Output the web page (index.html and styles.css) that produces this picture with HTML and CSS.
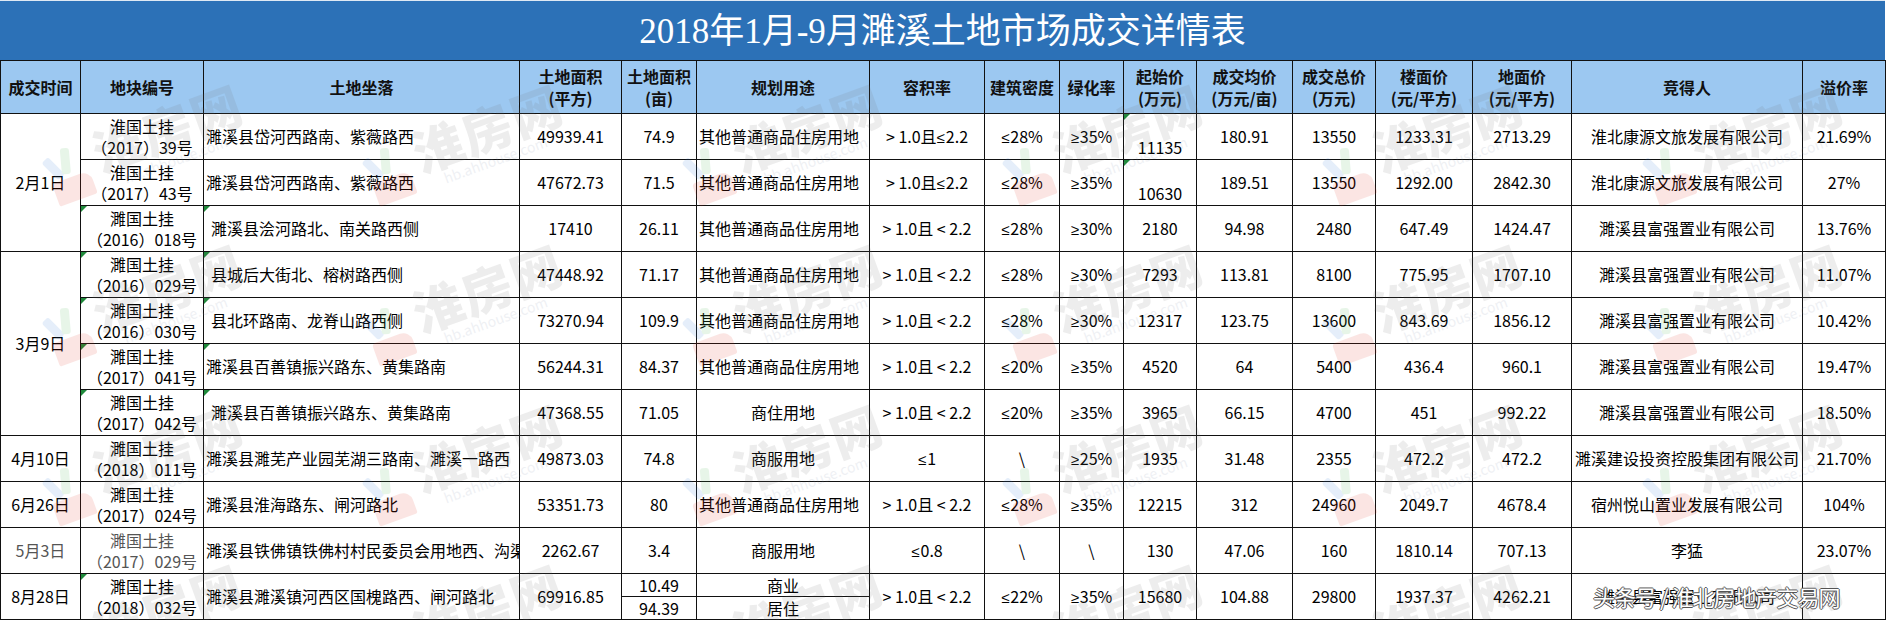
FILE: index.html
```html
<!DOCTYPE html>
<html lang="zh-CN">
<head>
<meta charset="utf-8">
<title>2018年1月-9月濉溪土地市场成交详情表</title>
<link rel="stylesheet" href="styles.css">
</head>
<body>
<div class="sheet">
  <div class="title">2018年1月-9月濉溪土地市场成交详情表</div>
  <table class="grid">
    <colgroup>
      <col class="c1"><col class="c2"><col class="c3"><col class="c4"><col class="c5"><col class="c6"><col class="c7"><col class="c8">
      <col class="c9"><col class="c10"><col class="c11"><col class="c12"><col class="c13"><col class="c14"><col class="c15"><col class="c16">
    </colgroup>
    <thead>
      <tr class="head">
        <th>成交时间</th><th>地块编号</th><th>土地坐落</th><th>土地面积<br>(平方)</th><th>土地面积<br>(亩)</th><th>规划用途</th><th>容积率</th><th>建筑密度</th>
        <th>绿化率</th><th>起始价<br>(万元)</th><th>成交均价<br>(万元/亩)</th><th>成交总价<br>(万元)</th><th>楼面价<br>(元/平方)</th><th>地面价<br>(元/平方)</th><th>竞得人</th><th>溢价率</th>
      </tr>
    </thead>
    <tbody>
      <tr>
        <td rowspan="3">2月1日</td><td>淮国土挂<br>（2017）39号</td><td class="addr">濉溪县岱河西路南、紫薇路西</td><td>49939.41</td><td>74.9</td><td class="use">其他普通商品住房用地</td><td>&gt; 1.0且<span class="op">≤</span>2.2</td><td><span class="op">≤</span>28%</td>
        <td><span class="op">≥</span>35%</td><td class="low mark">11135</td><td>180.91</td><td>13550</td><td>1233.31</td><td>2713.29</td><td>淮北康源文旅发展有限公司</td><td>21.69%</td>
      </tr>
      <tr>
        <td>淮国土挂<br>（2017）43号</td><td class="addr">濉溪县岱河西路南、紫薇路西</td><td>47672.73</td><td>71.5</td><td class="use">其他普通商品住房用地</td><td>&gt; 1.0且<span class="op">≤</span>2.2</td><td><span class="op">≤</span>28%</td>
        <td><span class="op">≥</span>35%</td><td class="low mark">10630</td><td>189.51</td><td>13550</td><td>1292.00</td><td>2842.30</td><td>淮北康源文旅发展有限公司</td><td>27%</td>
      </tr>
      <tr>
        <td class="mark">濉国土挂<br>（2016）018号</td><td class="addr indent mark">濉溪县浍河路北、南关路西侧</td><td>17410</td><td>26.11</td><td class="use">其他普通商品住房用地</td><td>&gt; 1.0且 &lt; 2.2</td><td><span class="op">≤</span>28%</td>
        <td><span class="op">≥</span>30%</td><td>2180</td><td>94.98</td><td>2480</td><td>647.49</td><td>1424.47</td><td>濉溪县富强置业有限公司</td><td>13.76%</td>
      </tr>
      <tr>
        <td rowspan="4">3月9日</td><td class="mark">濉国土挂<br>（2016）029号</td><td class="addr indent mark">县城后大街北、榕树路西侧</td><td>47448.92</td><td>71.17</td><td class="use">其他普通商品住房用地</td><td>&gt; 1.0且 &lt; 2.2</td><td><span class="op">≤</span>28%</td>
        <td><span class="op">≥</span>30%</td><td>7293</td><td>113.81</td><td>8100</td><td>775.95</td><td>1707.10</td><td>濉溪县富强置业有限公司</td><td>11.07%</td>
      </tr>
      <tr>
        <td class="mark">濉国土挂<br>（2016）030号</td><td class="addr indent mark">县北环路南、龙脊山路西侧</td><td>73270.94</td><td>109.9</td><td class="use">其他普通商品住房用地</td><td>&gt; 1.0且 &lt; 2.2</td><td><span class="op">≤</span>28%</td>
        <td><span class="op">≥</span>30%</td><td>12317</td><td>123.75</td><td>13600</td><td>843.69</td><td>1856.12</td><td>濉溪县富强置业有限公司</td><td>10.42%</td>
      </tr>
      <tr>
        <td class="mark">濉国土挂<br>（2017）041号</td><td class="addr mark">濉溪县百善镇振兴路东、黄集路南</td><td>56244.31</td><td>84.37</td><td class="use">其他普通商品住房用地</td><td>&gt; 1.0且 &lt; 2.2</td><td><span class="op">≤</span>20%</td>
        <td><span class="op">≥</span>35%</td><td>4520</td><td>64</td><td>5400</td><td>436.4</td><td>960.1</td><td>濉溪县富强置业有限公司</td><td>19.47%</td>
      </tr>
      <tr>
        <td class="mark">濉国土挂<br>（2017）042号</td><td class="addr indent mark">濉溪县百善镇振兴路东、黄集路南</td><td>47368.55</td><td>71.05</td><td>商住用地</td><td>&gt; 1.0且 &lt; 2.2</td><td><span class="op">≤</span>20%</td>
        <td><span class="op">≥</span>35%</td><td>3965</td><td>66.15</td><td>4700</td><td>451</td><td>992.22</td><td>濉溪县富强置业有限公司</td><td>18.50%</td>
      </tr>
      <tr>
        <td>4月10日</td><td>濉国土挂<br>（2018）011号</td><td class="addr">濉溪县濉芜产业园芜湖三路南、濉溪一路西</td><td>49873.03</td><td>74.8</td><td>商服用地</td><td><span class="op">≤</span>1</td><td>\</td>
        <td><span class="op">≥</span>25%</td><td>1935</td><td>31.48</td><td>2355</td><td>472.2</td><td>472.2</td><td>濉溪建设投资控股集团有限公司</td><td>21.70%</td>
      </tr>
      <tr>
        <td>6月26日</td><td>濉国土挂<br>（2017）024号</td><td class="addr">濉溪县淮海路东、闸河路北</td><td>53351.73</td><td>80</td><td class="use">其他普通商品住房用地</td><td>&gt; 1.0且 &lt; 2.2</td><td><span class="op">≤</span>28%</td>
        <td><span class="op">≥</span>35%</td><td>12215</td><td>312</td><td>24960</td><td>2049.7</td><td>4678.4</td><td>宿州悦山置业发展有限公司</td><td>104%</td>
      </tr>
      <tr>
        <td class="dim">5月3日</td><td class="dim">濉国土挂<br>（2017）029号</td><td class="addr clip">濉溪县铁佛镇铁佛村村民委员会用地西、沟渠</td><td>2262.67</td><td>3.4</td><td>商服用地</td><td><span class="op">≤</span>0.8</td><td>\</td>
        <td>\</td><td>130</td><td>47.06</td><td>160</td><td>1810.14</td><td>707.13</td><td>李猛</td><td>23.07%</td>
      </tr>
      <tr>
        <td>8月28日</td><td class="mark">濉国土挂<br>（2018）032号</td><td class="addr">濉溪县濉溪镇河西区国槐路西、闸河路北</td><td>69916.85</td>
        <td class="split"><div class="half">10.49</div><div class="half lower">94.39</div></td>
        <td class="split"><div class="half">商业</div><div class="half lower">居住</div></td>
        <td>&gt; 1.0且 &lt; 2.2</td><td><span class="op">≤</span>22%</td>
        <td><span class="op">≥</span>35%</td><td>15680</td><td>104.88</td><td>29800</td><td>1937.37</td><td>4262.21</td>
        <td class="host">濉溪县富强置业有限公司<span class="stamp">头条号 / 淮北房地产交易网</span></td><td></td>
      </tr>
    </tbody>
  </table>

  <div class="wm-layer" aria-hidden="true">
    <div class="wm"><span class="wm-logo"><i class="p1"></i><i class="p2"></i><i class="p3"></i></span><span class="wm-text">淮房网<small>hb.ahhouse.com</small></span></div>
    <div class="wm"><span class="wm-logo"><i class="p1"></i><i class="p2"></i><i class="p3"></i></span><span class="wm-text">淮房网<small>hb.ahhouse.com</small></span></div>
    <div class="wm"><span class="wm-logo"><i class="p1"></i><i class="p2"></i><i class="p3"></i></span><span class="wm-text">淮房网<small>hb.ahhouse.com</small></span></div>
    <div class="wm"><span class="wm-logo"><i class="p1"></i><i class="p2"></i><i class="p3"></i></span><span class="wm-text">淮房网<small>hb.ahhouse.com</small></span></div>
    <div class="wm"><span class="wm-logo"><i class="p1"></i><i class="p2"></i><i class="p3"></i></span><span class="wm-text">淮房网<small>hb.ahhouse.com</small></span></div>
    <div class="wm"><span class="wm-logo"><i class="p1"></i><i class="p2"></i><i class="p3"></i></span><span class="wm-text">淮房网<small>hb.ahhouse.com</small></span></div>
    <div class="wm"><span class="wm-logo"><i class="p1"></i><i class="p2"></i><i class="p3"></i></span><span class="wm-text">淮房网<small>hb.ahhouse.com</small></span></div>
    <div class="wm"><span class="wm-logo"><i class="p1"></i><i class="p2"></i><i class="p3"></i></span><span class="wm-text">淮房网<small>hb.ahhouse.com</small></span></div>
    <div class="wm"><span class="wm-logo"><i class="p1"></i><i class="p2"></i><i class="p3"></i></span><span class="wm-text">淮房网<small>hb.ahhouse.com</small></span></div>
    <div class="wm"><span class="wm-logo"><i class="p1"></i><i class="p2"></i><i class="p3"></i></span><span class="wm-text">淮房网<small>hb.ahhouse.com</small></span></div>
    <div class="wm"><span class="wm-logo"><i class="p1"></i><i class="p2"></i><i class="p3"></i></span><span class="wm-text">淮房网<small>hb.ahhouse.com</small></span></div>
    <div class="wm"><span class="wm-logo"><i class="p1"></i><i class="p2"></i><i class="p3"></i></span><span class="wm-text">淮房网<small>hb.ahhouse.com</small></span></div>
    <div class="wm"><span class="wm-logo"><i class="p1"></i><i class="p2"></i><i class="p3"></i></span><span class="wm-text">淮房网<small>hb.ahhouse.com</small></span></div>
    <div class="wm"><span class="wm-logo"><i class="p1"></i><i class="p2"></i><i class="p3"></i></span><span class="wm-text">淮房网<small>hb.ahhouse.com</small></span></div>
    <div class="wm"><span class="wm-logo"><i class="p1"></i><i class="p2"></i><i class="p3"></i></span><span class="wm-text">淮房网<small>hb.ahhouse.com</small></span></div>
    <div class="wm"><span class="wm-logo"><i class="p1"></i><i class="p2"></i><i class="p3"></i></span><span class="wm-text">淮房网<small>hb.ahhouse.com</small></span></div>
    <div class="wm"><span class="wm-logo"><i class="p1"></i><i class="p2"></i><i class="p3"></i></span><span class="wm-text">淮房网<small>hb.ahhouse.com</small></span></div>
    <div class="wm"><span class="wm-logo"><i class="p1"></i><i class="p2"></i><i class="p3"></i></span><span class="wm-text">淮房网<small>hb.ahhouse.com</small></span></div>
    <div class="wm"><span class="wm-logo"><i class="p1"></i><i class="p2"></i><i class="p3"></i></span><span class="wm-text">淮房网<small>hb.ahhouse.com</small></span></div>
    <div class="wm"><span class="wm-logo"><i class="p1"></i><i class="p2"></i><i class="p3"></i></span><span class="wm-text">淮房网<small>hb.ahhouse.com</small></span></div>
    <div class="wm"><span class="wm-logo"><i class="p1"></i><i class="p2"></i><i class="p3"></i></span><span class="wm-text">淮房网<small>hb.ahhouse.com</small></span></div>
    <div class="wm"><span class="wm-logo"><i class="p1"></i><i class="p2"></i><i class="p3"></i></span><span class="wm-text">淮房网<small>hb.ahhouse.com</small></span></div>
    <div class="wm"><span class="wm-logo"><i class="p1"></i><i class="p2"></i><i class="p3"></i></span><span class="wm-text">淮房网<small>hb.ahhouse.com</small></span></div>
    <div class="wm"><span class="wm-logo"><i class="p1"></i><i class="p2"></i><i class="p3"></i></span><span class="wm-text">淮房网<small>hb.ahhouse.com</small></span></div>
  </div>
</div>
</body>
</html>
```

FILE: styles.css
```css
html, body {
  margin: 0;
  padding: 0;
  background: #ffffff;
}

body {
  font-family: "Noto Sans CJK SC", "Noto Sans", sans-serif;
  color: #000;
}

.sheet {
  position: relative;
  width: 1886px;
  height: 620px;
  overflow: hidden;
}

.title {
  box-sizing: border-box;
  width: 1885px;
  height: 60px;
  border-top: 1px solid #dfe9f4;
  background: #2c71b7;
  color: #ffffff;
  font-family: "Liberation Serif", "Noto Sans CJK SC", serif;
  font-size: 35px;
  line-height: 1;
  display: flex;
  align-items: center;
  justify-content: center;
  padding-top: 2px;
}

.grid {
  border-collapse: collapse;
  table-layout: fixed;
  width: 1885px;
}

.c1 { width: 80px; }
.c2 { width: 123px; }
.c3 { width: 316px; }
.c4 { width: 102px; }
.c5 { width: 75px; }
.c6 { width: 173px; }
.c7 { width: 115px; }
.c8 { width: 75px; }
.c9 { width: 64px; }
.c10 { width: 73px; }
.c11 { width: 96px; }
.c12 { width: 83px; }
.c13 { width: 97px; }
.c14 { width: 99px; }
.c15 { width: 231px; }
.c16 { width: 83px; }

.grid th,
.grid td {
  border: 1px solid #111;
  padding: 0;
  text-align: center;
  vertical-align: middle;
  font-size: 16px;
  line-height: 21px;
  white-space: nowrap;
}

.grid th {
  background: #9cc8f1;
  font-weight: 700;
  line-height: 22px;
  color: #111;
}

.head { height: 53px; }
.grid tbody tr { height: 46px; }

.grid td { position: relative; }

.op {
  font-family: "Liberation Sans", "DejaVu Sans", sans-serif;
  font-size: 15px;
  padding-right: 1px;
}

.addr {
  text-align: left !important;
  padding-left: 2px !important;
}
.addr.indent { padding-left: 7px !important; }
.clip {
  overflow: hidden;
  text-overflow: clip;
}

.use {
  text-align: left !important;
  padding-left: 2px !important;
}

.low {
  vertical-align: bottom !important;
  padding-bottom: 1px !important;
}

.dim { color: #555; }

.mark::before {
  content: "";
  position: absolute;
  left: 0;
  top: 0;
  width: 0;
  height: 0;
  border-top: 6px solid #1f8a3b;
  border-right: 6px solid transparent;
}

.split { vertical-align: top !important; }
.split .half {
  height: 22px;
  line-height: 23px;
}
.split .lower {
  border-top: 1px solid #111;
  height: 22px;
  line-height: 22px;
}

.stamp {
  position: absolute;
  left: 21px;
  top: 9px;
  z-index: 3;
  font-size: 22px;
  line-height: 26px;
  letter-spacing: -1px;
  color: #ffffff;
  text-shadow:
    1px 0 0 #555, -1px 0 0 #555, 0 1px 0 #555, 0 -1px 0 #555;
}

.wm-layer {
  position: absolute;
  left: 0;
  top: 0;
  width: 1886px;
  height: 620px;
  pointer-events: none;
  display: grid;
  grid-template-columns: repeat(6, 320px);
  grid-auto-rows: 160px;
  padding: 0 0 0 20px;
  box-sizing: border-box;
  z-index: 2;
}

.wm {
  display: flex;
  align-items: flex-end;
  gap: 4px;
  transform: rotate(-20deg);
  opacity: 0.12;
  padding-top: 40px;
}

.wm-logo {
  position: relative;
  width: 50px;
  height: 56px;
  flex: none;
}
.wm-logo i {
  position: absolute;
  display: block;
  border-radius: 3px;
}
.wm-logo .p1 { left: 6px; top: 4px; width: 9px; height: 24px; background: #2f7bd8; transform: rotate(-25deg); }
.wm-logo .p2 { left: 20px; top: 0; width: 9px; height: 26px; background: #42b34a; transform: rotate(15deg); }
.wm-logo .p3 { left: 4px; top: 30px; width: 40px; height: 24px; background: #e2321f; border-radius: 4px 10px 2px 2px; }

.wm-text {
  display: flex;
  flex-direction: column;
  font-size: 50px;
  font-weight: 900;
  line-height: 54px;
  letter-spacing: 2px;
  color: #6f6f6f;
}
.wm-text small {
  font-size: 14px;
  line-height: 14px;
  font-weight: 400;
  letter-spacing: 0;
  color: #7c8aa6;
  padding-left: 20px;
}
```
